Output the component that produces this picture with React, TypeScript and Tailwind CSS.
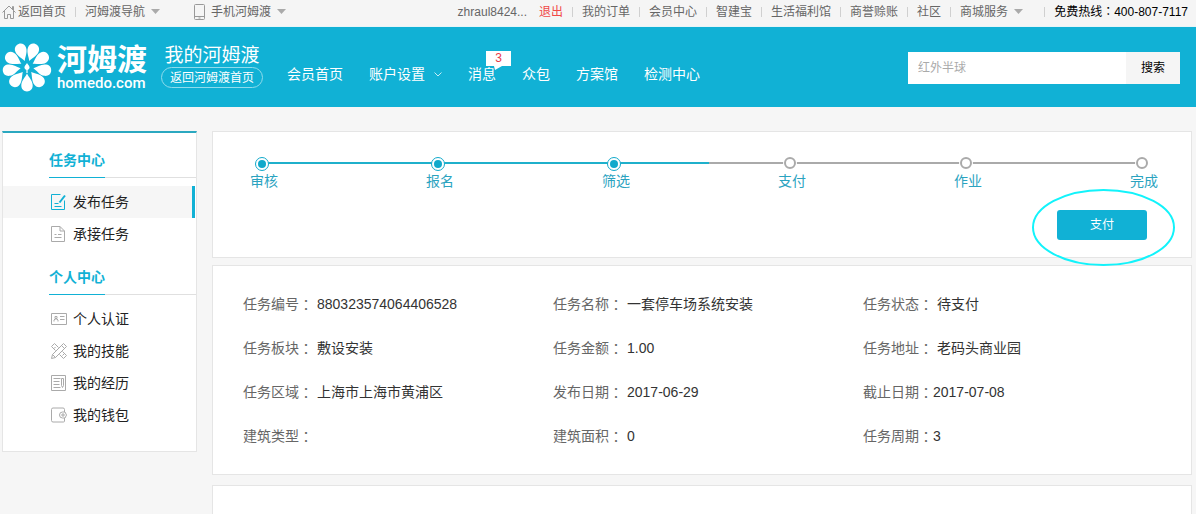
import React, { ReactNode } from 'react';

interface Field {
  label: string;
  value: string;
  tight?: boolean;
}

const topLinks = ['我的订单', '会员中心', '智建宝', '生活福利馆', '商誉赊账', '社区'];

const steps = [
  { name: '审核', done: true },
  { name: '报名', done: true },
  { name: '筛选', done: true },
  { name: '支付', done: false },
  { name: '作业', done: false },
  { name: '完成', done: false },
];

const fields: Field[] = [
  { label: '任务编号', value: '880323574064406528' },
  { label: '任务名称', value: '一套停车场系统安装' },
  { label: '任务状态', value: '待支付' },
  { label: '任务板块', value: '敷设安装' },
  { label: '任务金额', value: '1.00' },
  { label: '任务地址', value: '老码头商业园' },
  { label: '任务区域', value: '上海市上海市黄浦区' },
  { label: '发布日期', value: '2017-06-29' },
  { label: '截止日期', value: '2017-07-08', tight: true },
  { label: '建筑类型', value: '' },
  { label: '建筑面积', value: '0' },
  { label: '任务周期', value: '3', tight: true },
];

// Full-width colon, centred in its cell
const Colon = () => <span className="font-['Noto_Sans_CJK_TC',sans-serif]">：</span>;

const Divider = () => <span className="mx-[9px] h-2.5 w-px bg-[#d0d0d0]" />;

const Caret = () => (
  <svg className="ml-1.5 h-[5px] w-[9px]" viewBox="0 0 9 5" fill="#aaa">
    <path d="M0 0h9L4.500 5z" />
  </svg>
);

const Icon = ({ children }: { children: ReactNode }) => (
  <svg className="h-4 w-4 shrink-0" viewBox="0 0 16 16" fill="none" stroke="currentColor">
    {children}
  </svg>
);

const Flower = () => (
  <svg className="h-[50px] w-[50px]" viewBox="-25 -25 50 50" fill="#fff">
    {[0, 1, 2, 3, 4, 5, 6, 7, 8].map((i) => (
      <path
        key={i}
        transform={`rotate(${i * 40 + 20})`}
        d="M0 -6.500C-1.500 -10 -5.700 -13.500 -5.700 -18.600C-5.700 -22.200 -3.200 -24.500 0 -24.500C3.200 -24.500 5.700 -22.200 5.700 -18.600C5.700 -13.500 1.500 -10 0 -6.500z"
      />
    ))}
    <path d="M0 -4C1 -2 2.600 -1.200 2.600 .6A2.600 2.600 0 0 1 .6 3V6H-.6V3A2.600 2.600 0 0 1 -2.600 .6C-2.600 -1.200 -1 -2 0 -4z" />
  </svg>
);

const TopBar = () => (
  <div className="flex h-[27px] items-center border-b border-[#e8f4f7] bg-[#f5f5f5] pr-2 pb-[3px] pl-0.5 text-xs whitespace-nowrap text-[#666]">
    <a href="#" className="flex items-center">
      <svg className="mr-0.5 h-[14px] w-[14px]" viewBox="0 0 14 14" fill="none" stroke="#999">
        <path d="M.5 7.500L7 1l6.500 6.500M2.500 6v7.500h3v-4h3v4h3V6M10.500 4V1.500h1V5" />
      </svg>
      返回首页
    </a>
    <Divider />
    <a href="#" className="flex items-center">
      河姆渡导航
      <Caret />
    </a>
    <a href="#" className="ml-[34px] flex items-center">
      <svg className="mr-1.5 h-4 w-[11px]" viewBox="0 0 11 16" fill="none" stroke="#999">
        <rect x=".5" y=".5" width="10" height="15" rx="1" />
        <path d="M.5 12.500h10M4.500 14h2" />
      </svg>
      手机河姆渡
      <Caret />
    </a>
    <div className="ml-auto flex items-center">
      <a href="#">zhraul8424...</a>
      <a href="#" className="ml-3 text-[#f04848]">退出</a>
      {topLinks.map((name) => (
        <React.Fragment key={name}>
          <Divider />
          <a href="#">{name}</a>
        </React.Fragment>
      ))}
      <Divider />
      <a href="#" className="mr-3 flex items-center">
        商城服务
        <Caret />
      </a>
      <Divider />
      <span className="text-black">
        免费热线<Colon />400-807-7117
      </span>
    </div>
  </div>
);

const Header = () => (
  <header className="flex h-20 bg-[#11b1d5] pr-4 pl-0.5 whitespace-nowrap text-white">
    <a href="#" className="flex items-center">
      <Flower />
      <span className="ml-[5px] flex flex-col pt-0.5">
        <span className="text-[30px] leading-[30px] font-bold">河姆渡</span>
        <span className="font-[Roboto,sans-serif] text-[15px] leading-4 font-medium">homedo.com</span>
      </span>
    </a>
    <div className="ml-[14px] flex flex-col items-center pt-[17px]">
      <span className="text-[19px] leading-[23px]">我的河姆渡</span>
      <a
        href="#"
        className="flex h-[21px] items-center rounded-full border border-[#8fdcec] px-2 text-xs"
      >
        返回河姆渡首页
      </a>
    </div>
    <nav className="ml-6 flex items-start gap-[26px] pt-9 text-sm leading-[22px]">
      <a href="#">会员首页</a>
      <a href="#" className="flex items-center">
        账户设置
        <svg className="ml-[9px] h-[5px] w-[8px]" viewBox="0 0 8 5" fill="none" stroke="#c5edf5">
          <path d="M.5 .5L4 4l3.500-3.500" />
        </svg>
      </a>
      <a href="#" className="relative">
        消息
        <span className="absolute -top-3 left-[18px] h-[15px] w-[25px] bg-white text-center text-xs leading-[15px] text-[#e8394a]">
          3
          <svg className="absolute top-full left-2 h-1 w-2" viewBox="0 0 8 4" fill="#fff">
            <path d="M0 0h8L1 4z" />
          </svg>
        </span>
      </a>
      <a href="#">众包</a>
      <a href="#">方案馆</a>
      <a href="#">检测中心</a>
    </nav>
    <form className="mt-[25px] ml-auto flex h-8 text-xs">
      <input
        type="text"
        aria-label="搜索商品"
        placeholder="红外半球"
        className="w-[218px] bg-white px-2.5 text-black outline-none placeholder:text-[#aaa]"
      />
      <button type="button" className="w-[54px] bg-[#f5f5f5] text-black">
        搜索
      </button>
    </form>
  </header>
);

const MenuTitle = ({ children }: { children: ReactNode }) => (
  <h2 className="mb-2 ml-[46px] flex h-[45px] items-end border-b border-[#e0e0e0] text-sm leading-6 font-bold text-[#11b1d5]">
    <span className="-mb-px border-b border-[#11b1d5] pb-[5px]">{children}</span>
  </h2>
);

const MenuItem = ({ icon, name, active }: { icon: ReactNode; name: string; active?: boolean }) => (
  <li className={active ? 'mr-px border-r-3 border-[#11b1d5] bg-[#f6f6f6]' : ''}>
    <a href="#" className="flex h-8 items-center gap-1.5 pl-12 text-sm text-[#222]">
      <span className={active ? 'text-[#11b1d5]' : 'text-[#aaa]'}>
        <Icon>{icon}</Icon>
      </span>
      {name}
    </a>
  </li>
);

const Sidebar = () => (
  <aside className="w-[195px] shrink-0 border border-t-2 border-[#e5e5e5] border-t-[#2ba8c0] bg-white pb-5">
    <MenuTitle>任务中心</MenuTitle>
    <ul>
      <MenuItem
        active
        name="发布任务"
        icon={
          <>
            <path d="M9.500 .5H.5v15h13V6.500M3.500 12.500h7M3.500 9.500h4" />
            <path d="M8.500 8.500L14 1.500" strokeWidth="2" />
          </>
        }
      />
      <MenuItem
        name="承接任务"
        icon={<path d="M9 .5H.5v15h13V5L9 .5v4.500h4.500M3.500 11.500h7M3.500 8.500h2M7 8.500h3.500" />}
      />
    </ul>
    <MenuTitle>个人中心</MenuTitle>
    <ul>
      <MenuItem
        name="个人认证"
        icon={<path d="M.5 2.500h15v11H.5zM3 10.500V9l1-1h2l1 1v1.500M4 5.500h2v2H4zM9 5.500h4.500M9 8.500h4.500" />}
      />
      <MenuItem
        name="我的技能"
        icon={
          <>
            <path d="M3.500 .5L7.500 4.500M.5 3.500L4.500 7.500M3.500 .5L.5 3.500M11.500 8.500l4 4-3 3-4-4M3 5.500l1.500-1.500M11.500 12.500l1.500-1.500" />
            <path d="M12.500 .5l3 3-11 11-4 1 1-4zM10.500 2.500l3 3M1.500 11.500l3 3" />
          </>
        }
      />
      <MenuItem
        name="我的经历"
        icon={<path d="M.5 .5h14v15H.5zM2.500 3.500h7M2.500 6.500h6M2.500 9.500h6M2.500 12.500h7M10.500 3.500h2v7l-1 2-1-2z" />}
      />
      <MenuItem
        name="我的钱包"
        icon={
          <path d="M13.500 5V2.500a1.500 1.500 0 0 0-1.500-1.500H2A1.500 1.500 0 0 0 .5 2.500v11A1.500 1.500 0 0 0 2 15h10.500a1 1 0 0 0 1-1v-3M11.500 5h2.500l1.500 3-1.500 3h-2.500a3 3 0 0 1 0-6zM11 7h2v2h-2z" />
        }
      />
    </ul>
  </aside>
);

const Progress = () => (
  <section className="h-[127px] border border-[#e5e5e5] bg-white pt-[25px] pr-[33px] pl-[37px]">
    <div className="grid">
      <div className="col-start-1 row-start-1 mt-[5px] mr-5 ml-3 flex h-0.5 bg-[#aaa]">
        <span className="w-[51%] bg-[#1fb0cb]" />
      </div>
      <ol className="col-start-1 row-start-1 flex justify-between text-sm text-[#2ba3bf]">
        {steps.map((step) => (
          <li key={step.name} className="w-7">
            <span className="flex h-[14px] items-start justify-center pr-1">
              {step.done ? (
                <span className="flex h-[14px] w-[14px] items-center justify-center rounded-full border border-[#11a9cb] bg-white">
                  <span className="h-2 w-2 rounded-full bg-[#11a9cb]" />
                </span>
              ) : (
                <span className="h-3 w-3 rounded-full border-2 border-[#aaa] bg-white ring-1 ring-white" />
              )}
            </span>
            <span className="block leading-5">{step.name}</span>
          </li>
        ))}
      </ol>
    </div>
    <div className="mt-[19px] mr-[11px] flex justify-end">
      <div className="relative">
        <button type="button" className="h-[30px] w-[90px] rounded-[3px] bg-[#11b1d5] text-xs text-white">
          支付
        </button>
        <svg
          className="pointer-events-none absolute -top-[21px] -left-[25px] h-[77px] w-[143px] max-w-none"
          viewBox="0 0 143 77"
          fill="none"
          stroke="#12f3fb"
          strokeWidth="2"
        >
          <ellipse cx="71.500" cy="38.500" rx="70.500" ry="37.500" />
        </svg>
      </div>
    </div>
  </section>
);

const Details = () => (
  <section className="border border-[#e5e5e5] bg-white py-4 pr-[18px] pl-[30px]">
    <dl className="grid auto-rows-[44px] grid-cols-3 text-sm leading-5">
      {fields.map((field) => (
        <div key={field.label} className="flex items-center whitespace-nowrap">
          <dt className="flex text-[#666]">
            {field.label}
            <Colon />
          </dt>
          <dd className={field.tight ? 'text-[#333]' : 'pl-1 text-[#333]'}>{field.value}</dd>
        </div>
      ))}
    </dl>
  </section>
);

export default function App() {
  return (
    <div className="flex h-screen min-w-[1100px] flex-col overflow-hidden bg-[#f6f6f6] font-['Liberation_Sans','Noto_Sans_CJK_SC',sans-serif]">
      <TopBar />
      <Header />
      <div className="flex flex-1 items-start gap-[15px] pt-6 pr-1 pl-0.5">
        <Sidebar />
        <main className="flex flex-1 flex-col self-stretch">
          <Progress />
          <div className="mt-[7px]">
            <Details />
          </div>
          <section className="mt-2.5 flex-1 border border-b-0 border-[#e5e5e5] bg-white" />
        </main>
      </div>
    </div>
  );
}
